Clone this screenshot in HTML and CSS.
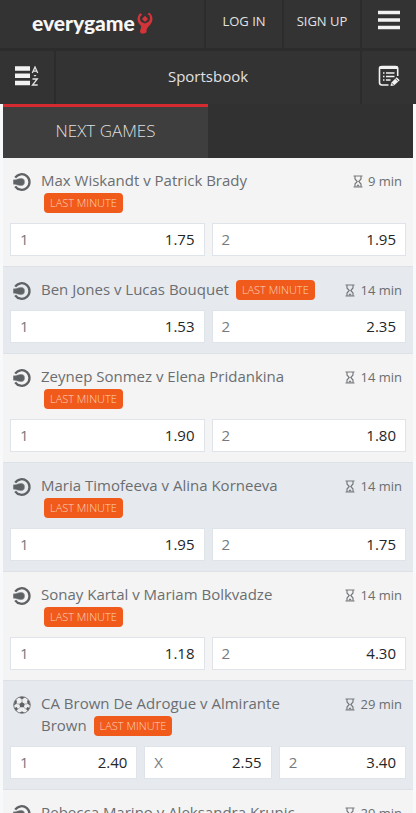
FILE: index.html
```
<!DOCTYPE html>
<html lang="en">
<head>
  <meta charset="UTF-8">
  <title>Everygame Sportsbook</title>
  <meta name="viewport" content="width=device-width, initial-scale=1.0">
  <link rel="stylesheet" href="styles.css">
</head>
<body>
  <svg class="sprite" aria-hidden="true">
    <symbol id="tennis" viewBox="0 0 18 18">
      <path d="M2.200 4.700A7.800 7.800 0 1 1 2.200 13.300" fill="none" stroke="#5f6264" stroke-width="2.300"/>
      <path d="M.2 6.800C3 7.200 5.500 5.300 8 5.300A3.700 3.700 0 0 1 8 12.700C5.500 12.700 3 11.200 .2 11.200Z" fill="#5f6264" stroke="#a5a7a9" stroke-width=".4"/>
    </symbol>
    <symbol id="soccer" viewBox="0 0 18 18">
      <circle cx="9" cy="9" r="8.300" fill="#eceef0" stroke="#6c6f72" stroke-width=".9"/>
      <path d="M9 6L11.800 8L10.800 11.200H7.200L6.200 8ZM6 1.500L9 3.200L12 1.500L9 .7ZM.8 9.500L3.600 7.800L4 4.500L2 4.500ZM17.200 9.500L14.400 7.800L14 4.500L16 4.500ZM3 15L5 13.200L3.800 11L1.500 12ZM15 15L13 13.200L14.200 11L16.500 12ZM6.500 17L9 15.200L11.500 17Z" fill="#5f6264"/>
      <path d="M9 3V6M3.600 7.800L6.200 8M14.400 7.800L11.800 8M5 13.200L7.200 11.200M13 13.200L10.800 11.200" fill="none" stroke="#8b8e91" stroke-width=".7"/>
    </symbol>
    <symbol id="hourglass" viewBox="0 0 10 13">
      <path d="M.5 1H9.500M.5 12H9.500M2 1.500V4L4.200 6.500L2 9V11.500M8 1.500V4L5.800 6.500L8 9V11.500" fill="none" stroke="#777a7d" stroke-width="1.200"/>
      <path d="M3 11.500L5 9.200L7 11.500Z" fill="#777a7d"/>
    </symbol>
  </svg>

  <header class="header">
    <div class="topbar">
      <a class="logo" href="#">
        <span>everygame</span>
        <svg class="logo-mark" viewBox="0 0 16 22" aria-hidden="true">
          <path d="M3.200 1C-.3 5-.5 9.500 3.600 13.200C5 14.800 3.500 16.500 3 19C2.800 21 4.500 22 7 21.500C9.500 21.200 9.800 20 9.500 18.500C9.600 16 11.500 14.500 13.200 12.700C16.400 9 16.300 4 12.300 .6L10.400 2.300L12.300 3.300C13.500 6 13 8.700 11.200 10L8 11.500L4.800 10.200C2.800 8.500 2.400 6 3.700 3.700L5.400 3Z" fill="#d2343a"/>
          <path d="M8 3.800L11.100 6.900L8 10L4.900 6.900Z" fill="#d2343a"/>
        </svg>
      </a>
      <a class="auth" href="#">LOG IN</a>
      <a class="auth" href="#">SIGN UP</a>
      <button class="end-btn" aria-label="Menu">
        <svg width="22" height="20" viewBox="0 0 22 20"><path d="M0 2.500H22M0 10H22M0 17.500H22" stroke="#f2f2f2" stroke-width="3.500"/></svg>
      </button>
    </div>
    <div class="subbar">
      <button class="sort-btn" aria-label="Sports A to Z">
        <svg width="24" height="20" viewBox="0 0 24 20">
          <path d="M0 2.500H15M0 9.800H15M0 17H15" stroke="#f2f2f2" stroke-width="4.500"/>
          <path d="M17.300 7L20 1L22.700 7M18 5.200H22M17.500 13H22.300L17.500 19H22.700" fill="none" stroke="#e4e4e4" stroke-width="1.300"/>
          <path d="M18.500 9H21.500L20 10.700Z" fill="#e4e4e4"/>
        </svg>
      </button>
      <h1 class="page-title">Sportsbook</h1>
      <button class="end-btn" aria-label="Bet slip">
        <svg width="22" height="22" viewBox="0 0 22 22">
          <path d="M10.500 20H4Q1.500 20 1.500 17.500V3.500Q1.500 1.500 4 1.500H17.500Q19.700 1.500 19.700 3.500V11" fill="none" stroke="#f2f2f2" stroke-width="1.600"/>
          <path d="M1.500 2.700H19.700" stroke="#f2f2f2" stroke-width="2.600"/>
          <path d="M5 8H6.500M8 8H16.500M5 11.500H6.500M8 11.500H16.500M5 15H6.500M8 15H12.500" stroke="#f2f2f2" stroke-width="1.500"/>
          <path d="M12.500 21L13.200 17.700L18.700 12.200L21.700 15.200L16 20.500Z" fill="#f2f2f2"/>
          <path d="M17.300 13.500L20.300 16.500M13.300 17.700L16 20.400" stroke="#333" stroke-width=".8"/>
        </svg>
      </button>
    </div>
  </header>

  <main class="content">
    <nav class="tabs">
      <button class="tab">NEXT GAMES</button>
    </nav>

    <section class="game">
      <div class="game-head">
        <svg class="sport"><use href="#tennis"/></svg>
        <div class="teams">Max Wiskandt v Patrick Brady <span class="badge">LAST MINUTE</span></div>
        <div class="time"><svg class="glass"><use href="#hourglass"/></svg>9 min</div>
      </div>
      <div class="odds">
        <button class="odd"><span class="pick">1</span>1.75</button>
        <button class="odd"><span class="pick">2</span>1.95</button>
      </div>
    </section>

    <section class="game">
      <div class="game-head">
        <svg class="sport"><use href="#tennis"/></svg>
        <div class="teams">Ben Jones v Lucas Bouquet <span class="badge">LAST MINUTE</span></div>
        <div class="time"><svg class="glass"><use href="#hourglass"/></svg>14 min</div>
      </div>
      <div class="odds">
        <button class="odd"><span class="pick">1</span>1.53</button>
        <button class="odd"><span class="pick">2</span>2.35</button>
      </div>
    </section>

    <section class="game">
      <div class="game-head">
        <svg class="sport"><use href="#tennis"/></svg>
        <div class="teams">Zeynep Sonmez v Elena Pridankina <span class="badge">LAST MINUTE</span></div>
        <div class="time"><svg class="glass"><use href="#hourglass"/></svg>14 min</div>
      </div>
      <div class="odds">
        <button class="odd"><span class="pick">1</span>1.90</button>
        <button class="odd"><span class="pick">2</span>1.80</button>
      </div>
    </section>

    <section class="game">
      <div class="game-head">
        <svg class="sport"><use href="#tennis"/></svg>
        <div class="teams">Maria Timofeeva v Alina Korneeva <span class="badge">LAST MINUTE</span></div>
        <div class="time"><svg class="glass"><use href="#hourglass"/></svg>14 min</div>
      </div>
      <div class="odds">
        <button class="odd"><span class="pick">1</span>1.95</button>
        <button class="odd"><span class="pick">2</span>1.75</button>
      </div>
    </section>

    <section class="game">
      <div class="game-head">
        <svg class="sport"><use href="#tennis"/></svg>
        <div class="teams">Sonay Kartal v Mariam Bolkvadze <span class="badge">LAST MINUTE</span></div>
        <div class="time"><svg class="glass"><use href="#hourglass"/></svg>14 min</div>
      </div>
      <div class="odds">
        <button class="odd"><span class="pick">1</span>1.18</button>
        <button class="odd"><span class="pick">2</span>4.30</button>
      </div>
    </section>

    <section class="game">
      <div class="game-head">
        <svg class="sport"><use href="#soccer"/></svg>
        <div class="teams">CA Brown De Adrogue v Almirante Brown <span class="badge">LAST MINUTE</span></div>
        <div class="time"><svg class="glass"><use href="#hourglass"/></svg>29 min</div>
      </div>
      <div class="odds">
        <button class="odd"><span class="pick">1</span>2.40</button>
        <button class="odd"><span class="pick">X</span>2.55</button>
        <button class="odd"><span class="pick">2</span>3.40</button>
      </div>
    </section>

    <section class="game">
      <div class="game-head">
        <svg class="sport"><use href="#tennis"/></svg>
        <div class="teams">Rebecca Marino v Aleksandra Krunic</div>
        <div class="time"><svg class="glass"><use href="#hourglass"/></svg>29 min</div>
      </div>
    </section>
  </main>
</body>
</html>
```
FILE: styles.css
```
* {
  box-sizing: border-box;
}
body {
  margin: 0;
  height: 100vh;
  display: flex;
  flex-direction: column;
  overflow: hidden;
  font-family: "Open Sans", "Noto Sans", sans-serif;
  font-size: 15px;
  color: #6b6e71;
  background: #f8f9fb;
}
button {
  margin: 0;
  padding: 0;
  border: 0;
  border-radius: 0;
  background: none;
  font: inherit;
  color: inherit;
  cursor: pointer;
}
a {
  color: inherit;
  text-decoration: none;
}
.sprite {
  display: none;
}

/* header */
.header {
  flex: none;
  background: #333;
  color: #e2e2e2;
}
.topbar,
.subbar {
  display: flex;
}
.topbar {
  height: 51px;
  border-bottom: 3px solid #2c2c2c;
}
.subbar {
  height: 53px;
}
.logo {
  flex: 1;
  display: flex;
  align-items: center;
  gap: 2px;
  padding: 0 0 3px 32px;
  font-family: Lato, sans-serif;
  font-size: 21px;
  font-weight: 900;
  line-height: 24px;
  color: #f6f6f6;
}
.logo-mark {
  width: 16px;
  height: 22px;
}
.auth {
  width: 78px;
  display: flex;
  align-items: center;
  justify-content: center;
  padding-bottom: 7px;
  border-left: 2px solid #2c2c2c;
  font-size: 13px;
}
.end-btn,
.sort-btn {
  flex: none;
  width: 56px;
  display: flex;
  align-items: center;
  justify-content: center;
}
.end-btn {
  border-left: 2px solid #2c2c2c;
}
.topbar .end-btn {
  padding-bottom: 8px;
}
.subbar .end-btn {
  padding-bottom: 3px;
}
.sort-btn {
  padding-bottom: 3px;
  border-right: 2px solid #2c2c2c;
}
.page-title {
  flex: 1;
  margin: 0;
  font-size: 15px;
  font-weight: 400;
  line-height: 51px;
  text-align: center;
}

/* next games */
.content {
  flex: 1;
  min-height: 0;
  margin: 0 3px;
  overflow-y: auto;
  scrollbar-width: none;
}
.tabs {
  display: flex;
  background: #313131;
}
.tab {
  width: 50%;
  height: 54px;
  padding-bottom: 4px;
  border-top: 3px solid #d52b30;
  background: #3e3e3e;
  color: #dedede;
  font-size: 17px;
  font-weight: 300;
}
.game {
  padding: 11px 7px 10px;
  border-bottom: 1px solid #dce1e7;
  background: #f4f4f4;
}
.game:nth-of-type(even) {
  background: #e6eaef;
}
.game-head {
  display: flex;
  align-items: flex-start;
  padding: 0 4px 0 3px;
}
.sport {
  flex: none;
  width: 18px;
  height: 18px;
  margin: 4px 10px 0 0;
}
.teams {
  flex: 1;
  line-height: 22px;
}
.badge {
  display: inline-block;
  height: 20px;
  margin-left: 3px;
  padding: 0 6px;
  border-radius: 4px;
  background: #f05a1a;
  color: #fdd3bc;
  font-size: 11px;
  font-weight: 300;
  line-height: 20px;
  vertical-align: bottom;
}
.time {
  width: 78px;
  display: flex;
  align-items: center;
  justify-content: flex-end;
  gap: 5px;
  padding-top: 2px;
  font-size: 13px;
  line-height: 20px;
}
.glass {
  width: 10px;
  height: 13px;
}
.odds {
  display: flex;
  gap: 7px;
  margin-top: 10px;
}
.odd {
  flex: 1;
  height: 33px;
  display: flex;
  align-items: center;
  justify-content: space-between;
  padding: 0 9px 1px;
  border: 1px solid #dfe4ea;
  background: #fff;
  color: #242628;
}
.pick {
  color: #777a7d;
}
```
